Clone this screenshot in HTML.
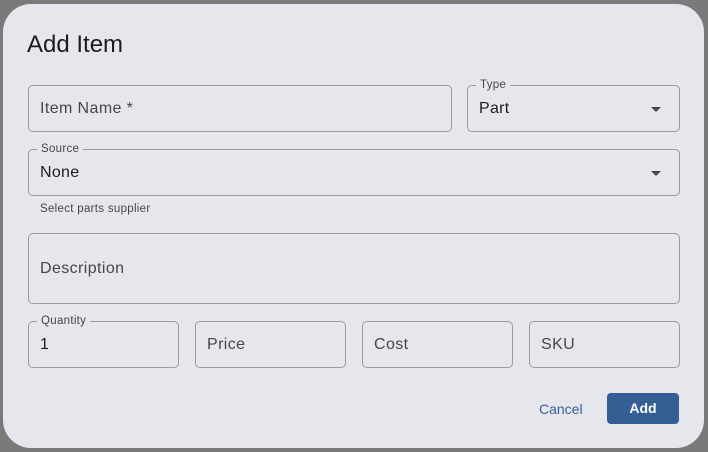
<!DOCTYPE html>
<html><head><meta charset="utf-8"><style>
*{box-sizing:border-box;margin:0;padding:0}
html,body{width:708px;height:452px;overflow:hidden;background:#7a7a7a;font-family:"Liberation Sans",sans-serif}
.dlg{position:absolute;left:3px;top:4px;width:701px;height:444px;background:#e6e7ec;border-radius:28px}
.t{position:absolute;left:27px;top:31px;font-size:24px;color:#1b1c20}
.f{position:absolute;border:1.5px solid #9a9ba0;border-radius:5px}
.f span.v{position:absolute;left:11px;font-size:16px;letter-spacing:0.3px;color:#1b1c20;top:50%;transform:translateY(-50%)}
.f span.p{position:absolute;left:11px;font-size:16px;letter-spacing:0.4px;color:#45464c;top:50%;transform:translateY(-50%)}
.f span.l{position:absolute;left:8px;top:-8px;font-size:11.5px;letter-spacing:0.3px;color:#45464c;background:#e6e7ec;padding:0 4px;line-height:14px}
.ar{position:absolute;right:18px;top:50%;margin-top:-2px;width:0;height:0;border-left:5px solid transparent;border-right:5px solid transparent;border-top:5px solid #45464c}
.h{position:absolute;left:40px;top:203px;font-size:11.5px;letter-spacing:0.3px;color:#45464c}
.c{position:absolute;left:539px;top:401px;font-size:14px;color:#355f94}
.a{position:absolute;left:607px;top:393px;width:72px;height:31px;background:#355f94;border-radius:4px;color:#fff;font-size:14px;font-weight:bold;text-align:center;line-height:31px}
</style></head><body>
<div class="dlg"></div>
<div class="t">Add Item</div>
<div class="f" style="left:28px;top:85px;width:424px;height:47px"><span class="p">Item Name *</span></div>
<div class="f" style="left:467px;top:85px;width:213px;height:47px"><span class="l">Type</span><span class="v">Part</span><div class="ar"></div></div>
<div class="f" style="left:28px;top:149px;width:652px;height:47px"><span class="l">Source</span><span class="v">None</span><div class="ar"></div></div>
<div class="h">Select parts supplier</div>
<div class="f" style="left:28px;top:233px;width:652px;height:71px"><span class="p">Description</span></div>
<div class="f" style="left:28px;top:321px;width:151px;height:47px"><span class="l">Quantity</span><span class="v">1</span></div>
<div class="f" style="left:195px;top:321px;width:151px;height:47px"><span class="p">Price</span></div>
<div class="f" style="left:362px;top:321px;width:151px;height:47px"><span class="p">Cost</span></div>
<div class="f" style="left:529px;top:321px;width:151px;height:47px"><span class="p">SKU</span></div>
<div class="c">Cancel</div>
<div class="a">Add</div>
</body></html>
